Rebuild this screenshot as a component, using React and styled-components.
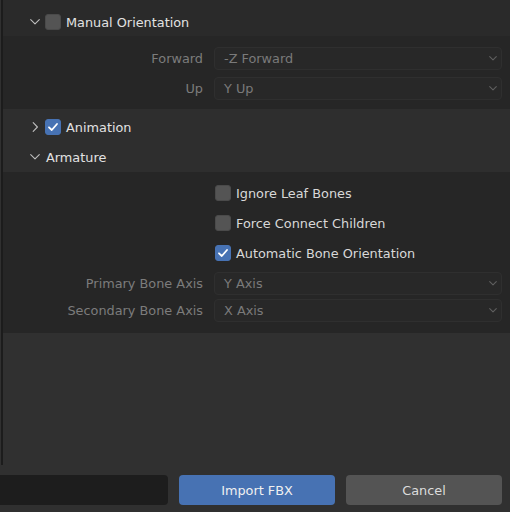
import React from "react";
import styled, { createGlobalStyle } from "styled-components";

const Global = createGlobalStyle`
  html, body { margin: 0; padding: 0; background: #303030; }
  body { font-family: "DejaVu Sans", "Noto Sans", sans-serif; }
`;

const Frame = styled.div`
  width: 510px;
  height: 512px;
  overflow: hidden;
  display: flex;
  flex-direction: column;
  background: #303030;
`;

const Scroll = styled.div`
  height: 465px;
  margin-left: 1px;
  border-left: 2px solid #1c1c1c;
  display: flex;
  flex-direction: column;
`;

const Header = styled.div`
  height: ${(p) => p.$h || 30}px;
  box-sizing: border-box;
  padding-top: ${(p) => p.$pt || 0}px;
  display: flex;
  align-items: center;
  padding-left: 27px;
  background: ${(p) => p.$bg || "#2e2e2e"};
  color: #e2e2e2;
  font-size: 12.85px;
  gap: 5px;
`;

const Chevron = styled.svg`
  width: ${(p) => p.$w || 9}px;
  height: 10px;
  flex: none;
  margin-right: ${(p) => p.$mr || 0}px;
`;

const Content = styled.div`
  background: #262626;
  display: flex;
  flex-direction: column;
  padding: ${(p) => p.$pad || "0"};
  gap: ${(p) => p.$gap || 0}px;
`;

const PropRow = styled.div`
  height: ${(p) => p.$h || 30}px;
  display: flex;
  align-items: center;
`;

const Label = styled.div`
  width: 211px;
  flex: none;
  text-align: right;
  padding-right: 11px;
  box-sizing: border-box;
  color: #7c7c7c;
  font-size: 12.85px;
`;

const Dropdown = styled.div`
  flex: none;
  width: 288px;
  height: 23px;
  box-sizing: border-box;
  border: 1px solid #2f2f2f;
  border-radius: 4px;
  background: #282828;
  display: flex;
  align-items: center;
  justify-content: space-between;
  padding: 0 4px 0 9px;
  color: #7a7a7a;
  font-size: 12.85px;
`;

const CheckRow = styled.div`
  height: 30px;
  display: flex;
  align-items: center;
  padding-left: 212px;
  gap: 5px;
  color: #d8d8d8;
  font-size: 12.85px;
`;

const Box = styled.div`
  width: 16px;
  height: 16px;
  flex: none;
  box-sizing: border-box;
  border-radius: 3px;
  background: ${(p) => (p.$on ? "#4772b3" : "#545454")};
  border: 1px solid ${(p) => (p.$on ? "#4772b3" : "#4a4a4a")};
  display: flex;
  align-items: center;
  justify-content: center;
`;

const Spacer = styled.div`
  flex: 1;
`;

const Footer = styled.div`
  flex: 1;
  display: flex;
  align-items: flex-start;
  gap: 11px;
  padding-top: 10px;
  padding-right: 8px;
`;

const PathField = styled.div`
  width: 168px;
  height: 30px;
  flex: none;
  background: #1d1d1d;
  border-radius: 0 4px 4px 0;
`;

const Button = styled.div`
  flex: 1;
  height: 30px;
  border-radius: 4px;
  display: flex;
  align-items: center;
  justify-content: center;
  background: ${(p) => (p.$primary ? "#4772b3" : "#545454")};
  color: ${(p) => (p.$primary ? "#f0f0f0" : "#dcdcdc")};
  font-size: 12.85px;
`;

const Down = ({ color = "#bdbdbd", mr, w = 10 }) => (
  <Chevron viewBox={`0 0 ${w} 10`} $w={w} $mr={mr}>
    <path
      d={`M0.7 2.6 L${w / 2} ${2.6 + w / 2 - 0.7} L${w - 0.7} 2.6`}
      fill="none"
      stroke={color}
      strokeWidth="1.1"
      strokeLinecap="round"
      strokeLinejoin="round"
    />
  </Chevron>
);
const Right = ({ color = "#bdbdbd" }) => (
  <Chevron viewBox="0 0 10 10" $w={10}>
    <path d="M3.2 0.6 L7.4 5 L3.2 9.4" fill="none" stroke={color} strokeWidth="1.1" strokeLinecap="round" strokeLinejoin="round" />
  </Chevron>
);
const Check = () => (
  <svg width="12" height="12" viewBox="0 0 12 12">
    <path d="M2 6.3 L4.8 9 L10 3" fill="none" stroke="#fff" strokeWidth="1.8" strokeLinecap="round" strokeLinejoin="round" />
  </svg>
);

const Select = ({ value }) => (
  <Dropdown>
    {value}
    <Down color="#5e5e5e" w={8} />
  </Dropdown>
);

export default function App() {
  return (
    <Frame>
      <Global />
      <Scroll>
        <Header $h={36} $pt={8} $bg="#2a2a2a">
          <Down />
          <Box />
          <span>Manual Orientation</span>
        </Header>
        <Content $pad="11px 0 9px" $gap={7}>
          <PropRow $h={23}>
            <Label>Forward</Label>
            <Select value="-Z Forward" />
          </PropRow>
          <PropRow $h={23}>
            <Label>Up</Label>
            <Select value="Y Up" />
          </PropRow>
        </Content>
        <Header $h={33} $pt={3}>
          <Right />
          <Box $on>
            <Check />
          </Box>
          <span>Animation</span>
        </Header>
        <Header $h={30}>
          <Down mr={1} />
          <span>Armature</span>
        </Header>
        <Content $pad="6px 0 9px" $gap={0}>
          <CheckRow>
            <Box />
            <span>Ignore Leaf Bones</span>
          </CheckRow>
          <CheckRow>
            <Box />
            <span>Force Connect Children</span>
          </CheckRow>
          <CheckRow>
            <Box $on>
              <Check />
            </Box>
            <span>Automatic Bone Orientation</span>
          </CheckRow>
          <PropRow $h={2} />
          <PropRow $h={27}>
            <Label>Primary Bone Axis</Label>
            <Select value="Y Axis" />
          </PropRow>
          <PropRow $h={27}>
            <Label>Secondary Bone Axis</Label>
            <Select value="X Axis" />
          </PropRow>
        </Content>
        <Spacer />
      </Scroll>
      <Footer>
        <PathField />
        <Button $primary>Import FBX</Button>
        <Button>Cancel</Button>
      </Footer>
    </Frame>
  );
}
